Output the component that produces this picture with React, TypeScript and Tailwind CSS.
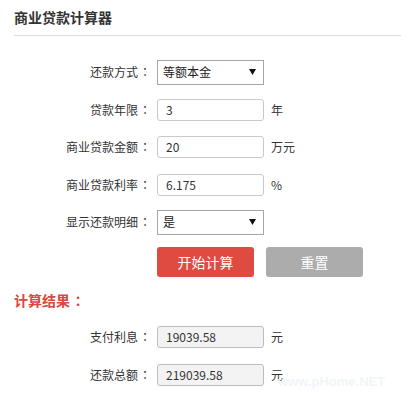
const labelCls = "flex w-[152px] justify-end text-[12px] text-[#333]";
const colonFont = { fontFamily: '"Noto Sans CJK JP", "Noto Sans CJK SC", sans-serif' };

function Row({ label, children }: { label: string; children: React.ReactNode }) {
    return (
        <div className="flex h-[26px] items-center">
            <div className={labelCls}>
                <span>{label}</span>
                <span className="inline-block w-[14px] text-center" style={colonFont}>：</span>
            </div>
            <div className="ml-[5px] flex items-center">{children}</div>
        </div>
    );
}

function FakeSelect({ value }: { value: string }) {
    return (
        <div className="flex h-[25px] w-[107px] items-center justify-between border border-[#a6a6a6] bg-white pl-[5px] pr-[7px] text-[12px] text-[#222]">
            <span>{value}</span>
            <svg width="7" height="6" viewBox="0 0 7 6">
                <path d="M0 0 H7 L3.5 6 Z" fill="#111" />
            </svg>
        </div>
    );
}

function Field({ value, unit, readOnly }: { value: string; unit?: string; readOnly?: boolean }) {
    return (
        <>
            <div
                className={
                    "flex h-[22px] w-[107px] items-center rounded-[3px] border pl-[8px] text-[12px] text-[#333] " +
                    (readOnly ? "border-[#bdbdbd] bg-[#f3f3f3]" : "border-[#c9c9c9] bg-white")
                }
            >
                {value}
            </div>
            {unit && <span className="ml-[7px] text-[12px] text-[#333]">{unit}</span>}
        </>
    );
}

export default function App() {
    return (
        <div
            className="relative h-[417px] w-[401px] overflow-hidden bg-white"
            style={{ fontFamily: '"Noto Sans CJK SC", "Noto Sans", sans-serif' }}
        >
            <div className="pl-[14px] pt-[7px] text-[14px] font-bold leading-[20px] text-[#333]">商业贷款计算器</div>
            <div className="ml-[14px] mt-[8px] border-b border-[#dcdcdc]"></div>

            <div className="mt-[23px] flex flex-col gap-[11.5px]">
                <Row label="还款方式">
                    <FakeSelect value="等额本金" />
                </Row>
                <Row label="贷款年限">
                    <Field value="3" unit="年" />
                </Row>
                <Row label="商业贷款金额">
                    <Field value="20" unit="万元" />
                </Row>
                <Row label="商业贷款利率">
                    <Field value="6.175" unit="%" />
                </Row>
                <Row label="显示还款明细">
                    <FakeSelect value="是" />
                </Row>
            </div>

            <div className="ml-[157px] mt-[12px] flex gap-[12px]">
                <button className="h-[30px] w-[97px] rounded-[3px] bg-[#df4b41] text-[14px] text-white">开始计算</button>
                <button className="h-[30px] w-[97px] rounded-[3px] bg-[#acacac] text-[14px] text-white">重置</button>
            </div>

            <div className="mt-[13px] flex pl-[14px] text-[14px] font-bold leading-[20px] text-[#d9473d]">
                <span>计算结果</span>
                <span className="inline-block w-[16px] text-center" style={colonFont}>：</span>
            </div>

            <div className="mt-[14px] flex flex-col gap-[12px]">
                <Row label="支付利息">
                    <Field value="19039.58" unit="元" readOnly />
                </Row>
                <Row label="还款总额">
                    <Field value="219039.58" unit="元" readOnly />
                </Row>
            </div>

            <div
                className="pointer-events-none absolute left-[278px] top-[372px] text-[13px] font-bold text-[#f1f5fb]"
                style={{ fontFamily: '"Liberation Sans", sans-serif' }}
            >
                www.pHome.NET
            </div>
        </div>
    );
}
